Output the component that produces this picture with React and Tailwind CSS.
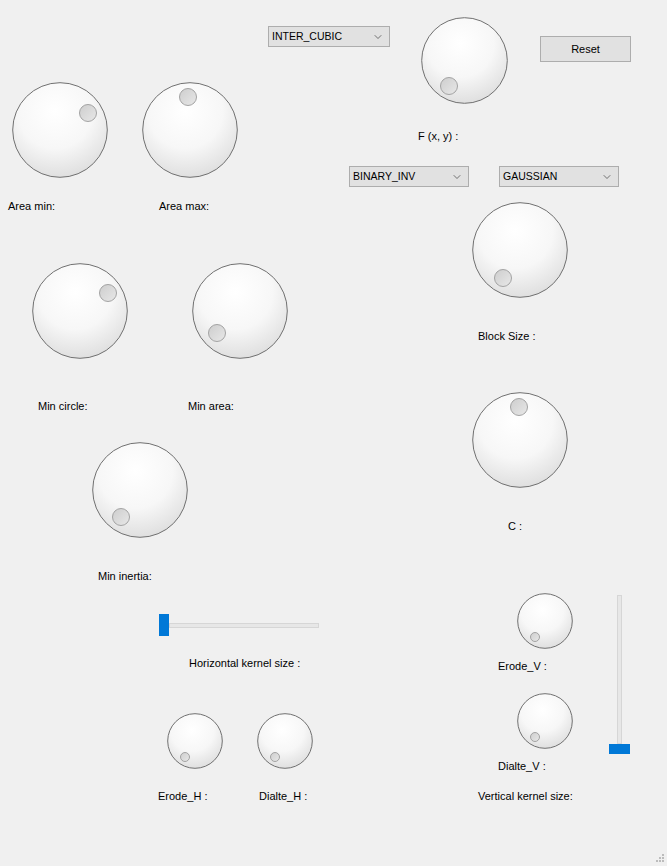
import { ChevronDown } from 'lucide-react'

const font = { fontFamily: '"Liberation Sans", Arial, sans-serif' }

// a Qt style dial: white dome with a small notch dot
function Knob({ id, size = 96, dotX, dotY, className = '' }) {
  const r = size / 2
  const dr = size > 80 ? 8.5 : 4.5
  return (
    <svg className={'block shrink-0 ' + className} width={size} height={size} viewBox={`0 0 ${size} ${size}`}>
      <defs>
        <radialGradient id={'g' + id} cx="45%" cy="30%" r="72%">
          <stop offset="0%" stopColor="#ffffff" />
          <stop offset="55%" stopColor="#f7f7f7" />
          <stop offset="100%" stopColor="#dedede" />
        </radialGradient>
        <linearGradient id={'d' + id} x1="0" y1="0" x2="1" y2="1">
          <stop offset="0%" stopColor="#cdcdcd" />
          <stop offset="100%" stopColor="#e8e8e8" />
        </linearGradient>
      </defs>
      <circle cx={r} cy={r} r={r - 0.7} fill={`url(#g${id})`} stroke="#707070" strokeWidth="1" />
      <circle cx={dotX} cy={dotY} r={dr} fill={`url(#d${id})`} stroke="#a3a3a3" strokeWidth="1" />
    </svg>
  )
}

function Label({ children, className = '' }) {
  return <p className={'text-[11px] leading-4 whitespace-nowrap ' + className}>{children}</p>
}

function Combo({ text, className = '' }) {
  return (
    <div
      className={
        'h-[21px] shrink-0 flex items-center justify-between pl-[3px] pr-[5px] bg-[#e1e1e1] border border-[#adadad] ' +
        className
      }
    >
      <span className="text-[10.5px]">{text}</span>
      <ChevronDown size={12} strokeWidth={1.3} color="#333" />
    </div>
  )
}

export default function App() {
  return (
    <div className="relative w-[667px] h-[866px] bg-[#f0f0f0] overflow-hidden flex text-black" style={font}>
      {/* Left column */}
      <div className="w-[345px] shrink-0 flex flex-col items-start">
        <Combo text="INTER_CUBIC" className="mt-[26px] ml-[268px] w-[122px]" />

        <div className="mt-[35px] flex items-start">
          <div className="ml-[8px] flex flex-col items-start">
            <Knob id="amin" dotX={76} dotY={31} className="ml-[4px]" />
            <Label className="mt-[20px]">Area min:</Label>
          </div>
          <div className="ml-[34px] flex flex-col items-start">
            <Knob id="amax" dotX={46} dotY={15} />
            <Label className="mt-[20px] ml-[17px]">Area max:</Label>
          </div>
        </div>

        <div className="mt-[49px] flex items-start">
          <div className="ml-[32px] w-[96px] flex flex-col items-start">
            <Knob id="mcircle" dotX={76} dotY={30} />
            <Label className="mt-[39px] ml-[6px]">Min circle:</Label>
          </div>
          <div className="ml-[60px] flex flex-col items-start">
            <Knob id="marea" dotX={25} dotY={70} className="ml-[4px]" />
            <Label className="mt-[39px]">Min area:</Label>
          </div>
        </div>

        <div className="mt-[28px] ml-[92px] flex flex-col items-start">
          <Knob id="minertia" dotX={29} dotY={75} />
          <Label className="mt-[30px] ml-[6px]">Min inertia:</Label>
        </div>

        {/* Horizontal kernel slider */}
        <div className="mt-[30px] ml-[159px] flex items-center">
          <div className="w-[10px] h-[22px] bg-[#0078d7]" />
          <div className="w-[150px] h-[5px] bg-[#e7e7e7] border border-[#d6d6d6]" />
        </div>
        <Label className="mt-[19px] ml-[189px]">Horizontal kernel size :</Label>

        <div className="mt-[42px] flex items-start">
          <div className="ml-[158px] w-[65px] flex flex-col items-start">
            <Knob id="erodeh" size={56} dotX={18} dotY={44} className="ml-[9px]" />
            <Label className="mt-[19px]">Erode_H :</Label>
          </div>
          <div className="ml-[34px] flex flex-col items-start">
            <Knob id="dialteh" size={56} dotX={18} dotY={44} />
            <Label className="mt-[19px] ml-[2px]">Dialte_H :</Label>
          </div>
        </div>
      </div>

      {/* Right column */}
      <div className="flex-1 flex flex-col items-start">
        <div className="flex items-start">
          <div className="ml-[76px] mt-[17px] flex flex-col items-start">
            <Knob id="fxy" size={87} dotX={28} dotY={69} />
            <Label className="mt-[24px] -ml-[3px]">F (x, y) :</Label>
          </div>
          <button className="ml-[32px] mt-[36px] w-[91px] h-[26px] bg-[#e1e1e1] border border-[#adadad] text-[11px]">
            Reset
          </button>
        </div>

        <div className="mt-[22px] flex">
          <Combo text="BINARY_INV" className="ml-[4px] w-[120px]" />
          <Combo text="GAUSSIAN" className="ml-[30px] w-[120px]" />
        </div>

        <div className="mt-[15px] ml-[127px] flex flex-col items-start">
          <Knob id="block" dotX={31} dotY={76} />
          <Label className="mt-[30px] ml-[6px]">Block Size :</Label>
        </div>

        <div className="mt-[48px] ml-[127px] flex flex-col items-start">
          <Knob id="c" dotX={47} dotY={15} />
          <Label className="mt-[30px] ml-[36px]">C :</Label>
        </div>

        <div className="mt-[59px] ml-[133px] flex items-start">
          <div className="w-[131px] flex flex-col items-start">
            <Knob id="erodev" size={56} dotX={18} dotY={44} className="ml-[39px]" />
            <Label className="mt-[9px] ml-[20px]">Erode_V :</Label>
            <Knob id="dialtev" size={56} dotX={18} dotY={44} className="mt-[19px] ml-[39px]" />
            <Label className="mt-[9px] ml-[20px]">Dialte_V :</Label>
            <Label className="mt-[14px]">Vertical kernel size:</Label>
          </div>
          {/* Vertical kernel slider */}
          <div className="mt-[2px] w-[21px] flex flex-col items-center">
            <div className="w-[5px] h-[149px] bg-[#e7e7e7] border border-[#d6d6d6]" />
            <div className="w-[21px] h-[10px] bg-[#0078d7]" />
          </div>
        </div>
      </div>

      {/* size grip in the window corner */}
      <svg className="absolute right-[2px] bottom-[3px]" width="10" height="10" viewBox="0 0 10 10">
        <rect x="7" y="1" width="2" height="2" fill="#bcbcbc" />
        <rect x="4" y="4" width="2" height="2" fill="#bcbcbc" />
        <rect x="7" y="4" width="2" height="2" fill="#bcbcbc" />
        <rect x="1" y="7" width="2" height="2" fill="#bcbcbc" />
        <rect x="4" y="7" width="2" height="2" fill="#bcbcbc" />
        <rect x="7" y="7" width="2" height="2" fill="#bcbcbc" />
      </svg>
    </div>
  )
}
